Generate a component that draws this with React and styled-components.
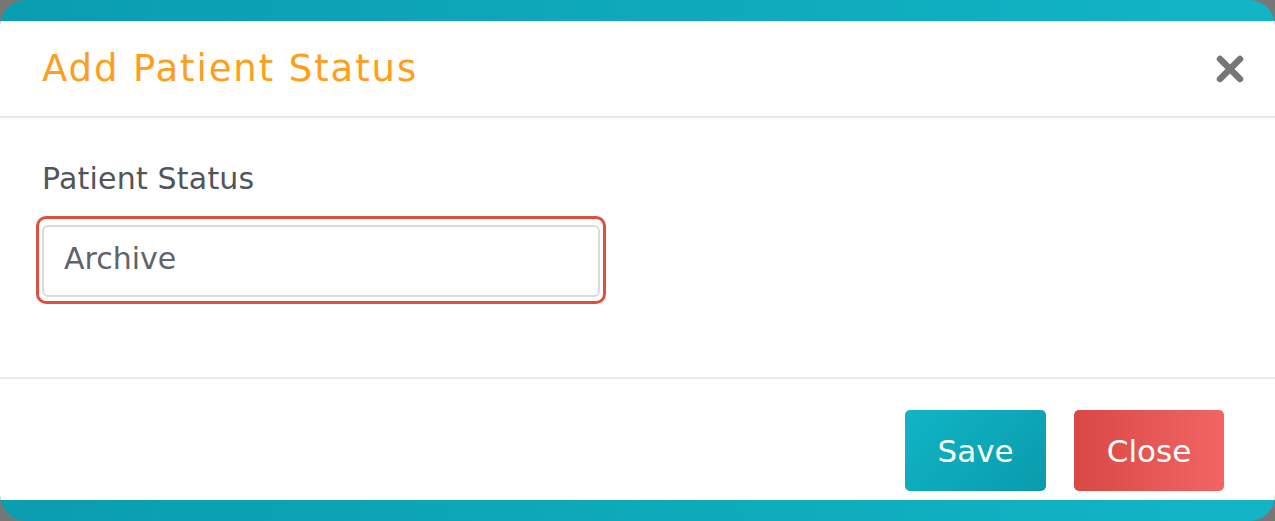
import React from 'react'
import styled, { createGlobalStyle } from 'styled-components'

const GlobalStyle = createGlobalStyle`
  html, body {
    margin: 0;
    padding: 0;
    background: #777;
  }
  * { box-sizing: border-box; }
`

const Modal = styled.div`
  width: 1275px;
  height: 521px;
  border-radius: 26px;
  overflow: hidden;
  background: linear-gradient(90deg, #0a9daf 0%, #12b5c6 100%);
  padding: 21px 0 21px;
  font-family: 'DejaVu Sans', Inter, sans-serif;
`

const Panel = styled.div`
  height: 100%;
  background: #fff;
  display: flex;
  flex-direction: column;
`

const Header = styled.div`
  height: 97px;
  display: flex;
  align-items: center;
  justify-content: space-between;
  padding: 0 30px 0 42px;
  border-bottom: 2px solid #e6e9ed;
`

const Title = styled.h4`
  margin: 0;
  font-size: 37px;
  font-weight: 400;
  letter-spacing: 1.9px;
  color: #ff9e1b;
`

const CloseX = styled.button`
  border: none;
  background: none;
  padding: 0;
  width: 30px;
  height: 30px;
  cursor: pointer;
  display: flex;
  align-items: center;
  justify-content: center;
`

const Body = styled.div`
  flex: 1;
  padding: 43px 42px 0;
  border-bottom: 2px solid #e6e9ed;
`

const Label = styled.label`
  display: block;
  font-size: 30px;
  letter-spacing: 0.2px;
  color: #50555c;
  margin-bottom: 20px;
`

const Focus = styled.div`
  width: 570px;
  margin-left: -6px;
  border: 3px solid #e04f3d;
  border-radius: 10px;
  padding: 6px 3px 4px;
`

const Input = styled.input`
  width: 100%;
  height: 72px;
  border: 2px solid #d7dbe0;
  border-radius: 6px;
  padding: 0 20px 6px;
  font: inherit;
  font-size: 30px;
  color: #5f646b;
  outline: none;
`

const Footer = styled.div`
  height: 121px;
  display: flex;
  align-items: flex-end;
  justify-content: flex-end;
  gap: 28px;
  padding: 0 51px 9px 0;
`

const Button = styled.button`
  height: 81px;
  width: ${(p) => p.w}px;
  border: none;
  border-radius: 5px;
  color: #fff;
  font: inherit;
  font-size: 31px;
  background: ${(p) =>
    p.danger
      ? 'linear-gradient(90deg, #d84845 0%, #f26563 100%)'
      : 'linear-gradient(135deg, #10b5c6 0%, #0a9bac 100%)'};
  cursor: pointer;
`

const App = () => {
  return (
    <>
      <GlobalStyle />
      <Modal>
        <Panel>
          <Header>
            <Title>Add Patient Status</Title>
            <CloseX aria-label="close">
              <svg width="30" height="30" viewBox="0 0 30 30">
                <path
                  d="M5 5 L25 25 M25 5 L5 25"
                  stroke="#767676"
                  strokeWidth="6.5"
                  strokeLinecap="round"
                />
              </svg>
            </CloseX>
          </Header>
          <Body>
            <Label>Patient Status</Label>
            <Focus>
              <Input defaultValue="Archive" />
            </Focus>
          </Body>
          <Footer>
            <Button w={141}>Save</Button>
            <Button w={150} danger>
              Close
            </Button>
          </Footer>
        </Panel>
      </Modal>
    </>
  )
}

export default App
